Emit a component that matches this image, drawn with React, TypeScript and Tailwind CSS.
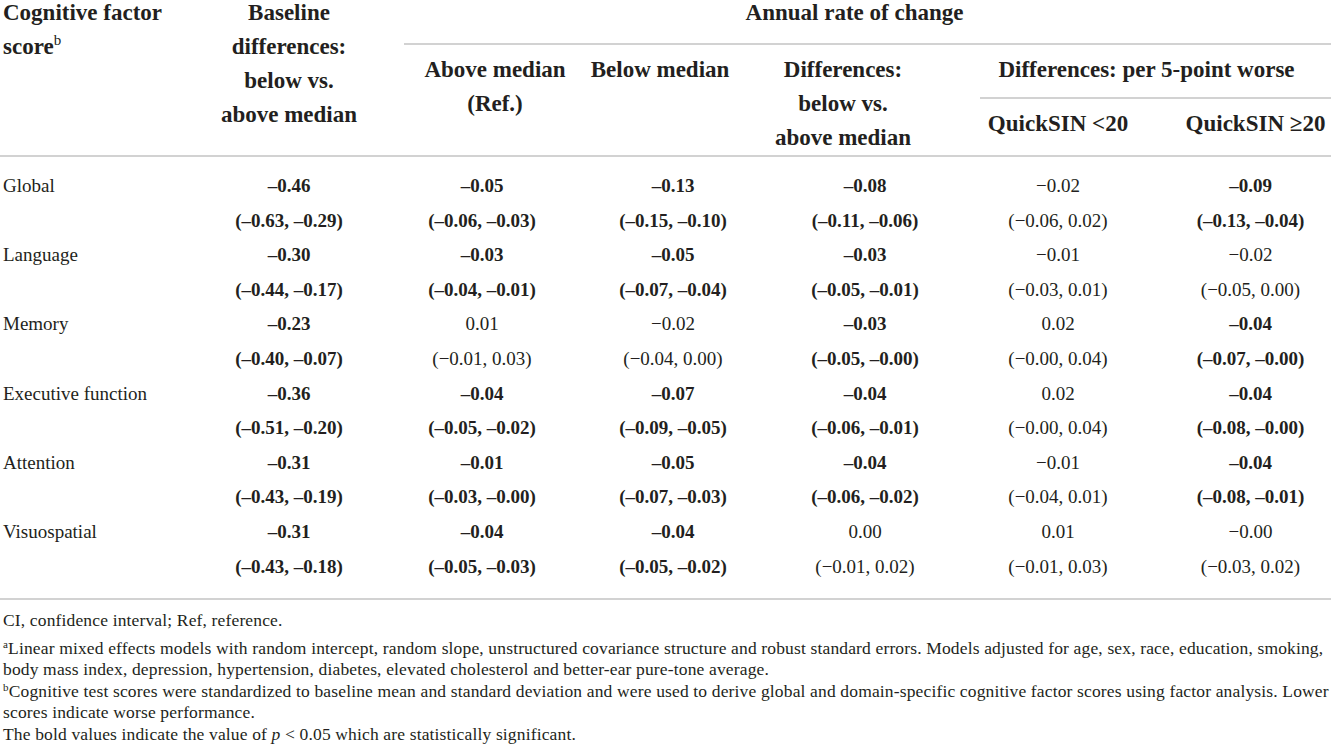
type Cell = { v: string; b?: boolean };
type Factor = { name: string; est: Cell[]; ci: Cell[] };

const FACTORS: Factor[] = [
  {
    name: "Global",
    est: [{ v: "-0.46", b: true }, { v: "-0.05", b: true }, { v: "-0.13", b: true }, { v: "-0.08", b: true }, { v: "-0.02" }, { v: "-0.09", b: true }],
    ci: [{ v: "(-0.63, -0.29)", b: true }, { v: "(-0.06, -0.03)", b: true }, { v: "(-0.15, -0.10)", b: true }, { v: "(-0.11, -0.06)", b: true }, { v: "(-0.06, 0.02)" }, { v: "(-0.13, -0.04)", b: true }],
  },
  {
    name: "Language",
    est: [{ v: "-0.30", b: true }, { v: "-0.03", b: true }, { v: "-0.05", b: true }, { v: "-0.03", b: true }, { v: "-0.01" }, { v: "-0.02" }],
    ci: [{ v: "(-0.44, -0.17)", b: true }, { v: "(-0.04, -0.01)", b: true }, { v: "(-0.07, -0.04)", b: true }, { v: "(-0.05, -0.01)", b: true }, { v: "(-0.03, 0.01)" }, { v: "(-0.05, 0.00)" }],
  },
  {
    name: "Memory",
    est: [{ v: "-0.23", b: true }, { v: "0.01" }, { v: "-0.02" }, { v: "-0.03", b: true }, { v: "0.02" }, { v: "-0.04", b: true }],
    ci: [{ v: "(-0.40, -0.07)", b: true }, { v: "(-0.01, 0.03)" }, { v: "(-0.04, 0.00)" }, { v: "(-0.05, -0.00)", b: true }, { v: "(-0.00, 0.04)" }, { v: "(-0.07, -0.00)", b: true }],
  },
  {
    name: "Executive function",
    est: [{ v: "-0.36", b: true }, { v: "-0.04", b: true }, { v: "-0.07", b: true }, { v: "-0.04", b: true }, { v: "0.02" }, { v: "-0.04", b: true }],
    ci: [{ v: "(-0.51, -0.20)", b: true }, { v: "(-0.05, -0.02)", b: true }, { v: "(-0.09, -0.05)", b: true }, { v: "(-0.06, -0.01)", b: true }, { v: "(-0.00, 0.04)" }, { v: "(-0.08, -0.00)", b: true }],
  },
  {
    name: "Attention",
    est: [{ v: "-0.31", b: true }, { v: "-0.01", b: true }, { v: "-0.05", b: true }, { v: "-0.04", b: true }, { v: "-0.01" }, { v: "-0.04", b: true }],
    ci: [{ v: "(-0.43, -0.19)", b: true }, { v: "(-0.03, -0.00)", b: true }, { v: "(-0.07, -0.03)", b: true }, { v: "(-0.06, -0.02)", b: true }, { v: "(-0.04, 0.01)" }, { v: "(-0.08, -0.01)", b: true }],
  },
  {
    name: "Visuospatial",
    est: [{ v: "-0.31", b: true }, { v: "-0.04", b: true }, { v: "-0.04", b: true }, { v: "0.00" }, { v: "0.01" }, { v: "-0.00" }],
    ci: [{ v: "(-0.43, -0.18)", b: true }, { v: "(-0.05, -0.03)", b: true }, { v: "(-0.05, -0.02)", b: true }, { v: "(-0.01, 0.02)" }, { v: "(-0.01, 0.03)" }, { v: "(-0.03, 0.02)" }],
  },
];

// data cells: column width + nudge so values sit where the source puts them
const DATA_COLS = [
  "w-[178px]",
  "w-[220px] pr-[12px]",
  "w-[138px] pl-[12px]",
  "w-[236px] pl-[22px]",
  "w-[172px]",
  "w-[187px] pl-[26px]",
];

// bold cells use an en dash, regular ones a true minus sign
const fmt = (c: Cell) => c.v.replace(/-/g, c.b ? "\u2013" : "\u2212");

function Rule({ className = "" }: { className?: string }) {
  return <div className={`h-[2px] bg-[#d2d2d2] ${className}`} />;
}

function DataRow({ label, cells }: { label: string; cells: Cell[] }) {
  return (
    <div className="flex h-[34.6px] items-center">
      <div className="w-[200px] pl-[3px]">{label}</div>
      {cells.map((c, i) => (
        <div key={i} className={`${DATA_COLS[i]} text-center ${c.b ? "font-bold" : ""}`}>
          {fmt(c)}
        </div>
      ))}
    </div>
  );
}

export default function App() {
  return (
    <div
      className="w-[1331px] bg-white text-[#231f20]"
      style={{ fontFamily: '"Liberation Serif", "Times New Roman", serif' }}
    >
      {/* header */}
      <div className="-mt-[4px] flex h-[159px] text-[23px] font-bold leading-[34px]">
        <div className="w-[200px] pl-[3px]">
          Cognitive factor
          <br />
          score<sup className="-top-[9px] text-[15px] font-normal">b</sup>
        </div>
        <div className="w-[178px] text-center">
          Baseline
          <br />
          differences:
          <br />
          below vs.
          <br />
          above median
        </div>
        <div className="flex flex-1 flex-col">
          <div className="h-[51px] text-center">Annual rate of change</div>
          <Rule className="ml-[26px]" />
          <div className="flex pt-[8px]">
            <div className="w-[220px] pl-[14px] text-center">
              Above median
              <br />
              (Ref.)
            </div>
            <div className="flex w-[138px] justify-center whitespace-nowrap pr-[14px]">Below median</div>
            <div className="w-[236px] pr-[22px] text-center">
              Differences:
              <br />
              below vs.
              <br />
              above median
            </div>
            <div className="flex flex-1 flex-col">
              <div className="h-[44px] pr-[10px] text-center">Differences: per 5-point worse</div>
              <Rule className="ml-[8px]" />
              <div className="flex pt-[8px]">
                <div className="flex w-[172px] justify-center whitespace-nowrap">QuickSIN &lt;20</div>
                <div className="flex w-[187px] justify-center whitespace-nowrap pl-[36px]">QuickSIN &#8805;20</div>
              </div>
            </div>
          </div>
        </div>
      </div>
      <Rule />

      {/* body */}
      <div className="pt-[12px] pb-[14px] text-[19px]">
        {FACTORS.map((f) => (
          <div key={f.name}>
            <DataRow label={f.name} cells={f.est} />
            <DataRow label="" cells={f.ci} />
          </div>
        ))}
      </div>
      <Rule />

      {/* footnotes */}
      <div className="pl-[3px] pt-[10px] text-[17.5px] leading-[21.5px] tracking-[0.15px] whitespace-nowrap">
        <p className="mb-[6px]">CI, confidence interval; Ref, reference.</p>
        <p>
          <sup className="text-[11px]">a</sup>Linear mixed effects models with random intercept, random slope, unstructured
          covariance structure and robust standard errors. Models adjusted for age, sex, race, education, smoking,
          <br />
          body mass index, depression, hypertension, diabetes, elevated cholesterol and better-ear pure-tone average.
        </p>
        <p>
          <sup className="text-[11px]">b</sup>Cognitive test scores were standardized to baseline mean and standard deviation
          and were used to derive global and domain-specific cognitive factor scores using factor analysis. Lower
          <br />
          scores indicate worse performance.
        </p>
        <p>
          The bold values indicate the value of <i>p</i> &lt; 0.05 which are statistically significant.
        </p>
      </div>
    </div>
  );
}
